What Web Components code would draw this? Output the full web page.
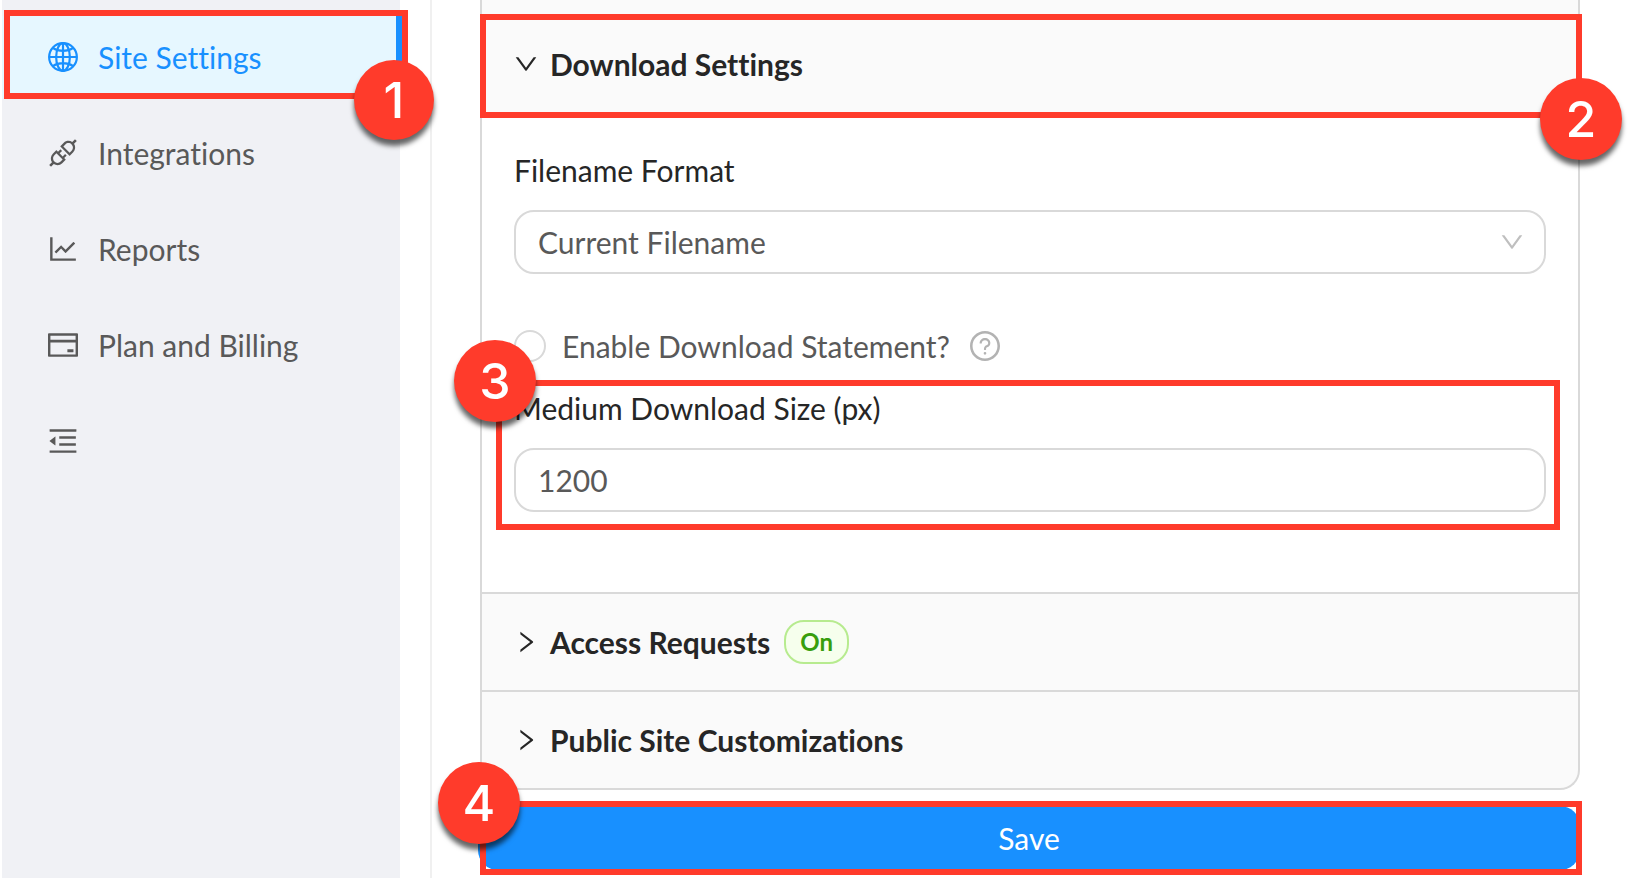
<!DOCTYPE html>
<html lang="en">
<head>
<meta charset="utf-8">
<title>Site Settings</title>
<style>
  :root {
    --primary: #1890ff;
    --mark: #ff3b2b;
    --border: #d9d9d9;
    --heading: #262626;
    --text: #595959;
  }
  body {
    margin: 0;
    background: #fff;
    color: var(--text);
    font: 30px/48px Lato, "Open Sans", sans-serif;
    font-variant-ligatures: none;
  }
</style>
</head>
<body>
<settings-page>
  <side-nav slot="nav">
    <step-mark step="1" class="nav-mark"><nav-item icon="global" active>Site Settings</nav-item></step-mark>
    <nav-item icon="api">Integrations</nav-item>
    <nav-item icon="chart">Reports</nav-item>
    <nav-item icon="card">Plan and Billing</nav-item>
    <nav-item icon="fold" label="Collapse menu"></nav-item>
  </side-nav>
  <collapse-group>
    <collapse-panel open marked heading="Download Settings">
      <download-form></download-form>
    </collapse-panel>
    <collapse-panel heading="Access Requests"><status-tag slot="extra">On</status-tag></collapse-panel>
    <collapse-panel heading="Public Site Customizations"></collapse-panel>
  </collapse-group>
  <save-bar>Save</save-bar>
</settings-page>

<script>
const ICONS = {
  global: `<g fill="none" stroke="currentColor" stroke-width="66">
    <circle cx="512" cy="512" r="414"/><ellipse cx="512" cy="512" rx="205" ry="414"/>
    <path d="M512 98v828M98 512h828M205 238c90 62 190 92 307 92s217-30 307-92M205 786c90-62 190-92 307-92s217 30 307 92"/></g>`,
  api: '<path d="M917.7 148.8l-42.4-42.4c-1.6-1.6-3.6-2.3-5.7-2.3s-4.1.8-5.7 2.3l-76.1 76.1a199.27 199.27 0 00-112.1-34.3c-51.2 0-102.4 19.5-141.5 58.6L432.3 308.7a8.03 8.03 0 000 11.3L704 591.7c1.6 1.6 3.6 2.3 5.7 2.3 2 0 4.1-.8 5.7-2.3l101.9-101.9c68.9-69 77-175.7 24.3-253.5l76.1-76.1c3.1-3.2 3.1-8.3 0-11.4zM769.1 441.7l-59.4 59.4-186.8-186.8 59.4-59.4c24.9-24.9 58.1-38.7 93.4-38.7 35.3 0 68.4 13.7 93.4 38.7 24.9 24.9 38.7 58.1 38.7 93.4 0 35.3-13.8 68.4-38.7 93.4zm-190.2 105a8.03 8.03 0 00-11.3 0L501 613.3 410.7 523l66.7-66.7c3.1-3.1 3.1-8.2 0-11.3L441 408.6a8.03 8.03 0 00-11.3 0L363 475.3l-43-43a7.85 7.85 0 00-5.7-2.3c-2 0-4.1.8-5.7 2.3L206.8 534.2c-68.9 69-77 175.7-24.3 253.5l-76.1 76.1a8.03 8.03 0 000 11.3l42.4 42.4c1.6 1.6 3.6 2.3 5.7 2.3s4.1-.8 5.7-2.3l76.1-76.1c33.7 22.9 72.9 34.3 112.1 34.3 51.2 0 102.4-19.5 141.5-58.6l101.9-101.9c3.1-3.1 3.1-8.2 0-11.3l-43-43 66.7-66.7c3.1-3.1 3.1-8.2 0-11.3l-36.6-36.2zM441.7 769.1a131.32 131.32 0 01-93.4 38.7c-35.3 0-68.4-13.7-93.4-38.7a131.32 131.32 0 01-38.7-93.4c0-35.3 13.7-68.4 38.7-93.4l59.4-59.4 186.8 186.8-59.4 59.4z"/>',
  chart: '<path d="M888 792H200V168c0-4.4-3.6-8-8-8h-56c-4.4 0-8 3.6-8 8v688c0 4.4 3.6 8 8 8h752c4.4 0 8-3.6 8-8v-56c0-4.4-3.6-8-8-8zM305.8 637.7c3.1 3.1 8.1 3.1 11.3 0l138.3-137.6L583 628.5c3.1 3.1 8.2 3.1 11.3 0l275.4-275.3c3.1-3.1 3.1-8.2 0-11.3l-39.6-39.6a8.03 8.03 0 00-11.3 0l-230 229.9L461.4 404a8.03 8.03 0 00-11.3 0L266.3 586.7a8.03 8.03 0 000 11.3l39.5 39.7z"/>',
  card: '<path d="M928 160H96c-17.7 0-32 14.3-32 32v640c0 17.7 14.3 32 32 32h832c17.7 0 32-14.3 32-32V192c0-17.7-14.3-32-32-32zm-792 72h752v120H136V232zm752 560H136V440h752v352zm-237-64h165c4.4 0 8-3.6 8-8v-72c0-4.4-3.6-8-8-8H651c-4.4 0-8 3.6-8 8v72c0 4.4 3.6 8 8 8z"/>',
  fold: '<path d="M408 442h480c4.4 0 8-3.6 8-8v-56c0-4.4-3.6-8-8-8H408c-4.4 0-8 3.6-8 8v56c0 4.4 3.6 8 8 8zm-8 204c0 4.4 3.6 8 8 8h480c4.4 0 8-3.6 8-8v-56c0-4.4-3.6-8-8-8H408c-4.4 0-8 3.6-8 8v56zm504-486H120c-4.4 0-8 3.6-8 8v56c0 4.4 3.6 8 8 8h784c4.4 0 8-3.6 8-8v-56c0-4.4-3.6-8-8-8zm0 632H120c-4.4 0-8 3.6-8 8v56c0 4.4 3.6 8 8 8h784c4.4 0 8-3.6 8-8v-56c0-4.4-3.6-8-8-8zM115.4 518.9L271.7 642c5.8 4.6 14.4.5 14.4-6.9V388.9c0-7.4-8.5-11.5-14.4-6.9L115.4 505.1a8.74 8.74 0 000 13.8z"/>',
  right: '<path d="M765.7 486.8L314.9 134.7A7.97 7.97 0 00302 141v77.3c0 4.9 2.3 9.6 6.1 12.6l360 281.1-360 281.1c-3.9 3-6.1 7.7-6.1 12.6V883c0 6.7 7.7 10.4 12.9 6.3l450.8-352.1a31.96 31.96 0 000-50.4z"/>',
  down: '<path d="M884 256h-75c-5.1 0-9.9 2.5-12.9 6.6L512 654.2 227.9 262.6c-3-4.1-7.8-6.6-12.9-6.6h-75c-6.5 0-10.3 7.4-6.5 12.7l352.6 486.1c12.8 17.6 39 17.6 51.7 0l352.6-486.1c3.9-5.3.1-12.7-6.4-12.7z"/>',
  question: '<path d="M512 64C264.6 64 64 264.6 64 512s200.6 448 448 448 448-200.6 448-448S759.4 64 512 64zm0 820c-205.4 0-372-166.6-372-372s166.6-372 372-372 372 166.6 372 372-166.6 372-372 372z"/><path d="M623.6 316.7C593.6 290.4 554 276 512 276s-81.6 14.5-111.6 40.7C369.2 344 352 380.7 352 420v7.6c0 4.4 3.6 8 8 8h48c4.4 0 8-3.6 8-8V420c0-44.1 43.1-80 96-80s96 35.9 96 80c0 31.1-22 59.6-56.1 72.7-21.2 8.1-39.2 22.3-52.1 40.9-13.1 19-19.9 41.8-19.9 64.9V620c0 4.4 3.6 8 8 8h48c4.4 0 8-3.6 8-8v-22.7a48.3 48.3 0 0130.9-44.8c59-22.7 97.1-74.7 97.1-132.5.1-39.3-17.1-76-48.3-103.3zM472 732a40 40 0 1080 0 40 40 0 10-80 0z"/>'
};

const icon = (name, size) =>
  `<svg width="${size}" height="${size}" viewBox="64 64 896 896" fill="currentColor" aria-hidden="true">${ICONS[name]}</svg>`;

class SettingsPage extends HTMLElement {
  constructor() {
    super();
    this.attachShadow({ mode: 'open' }).innerHTML = `
      <style>
        :host {
          display: flex;
          gap: 30px;
          min-height: 100vh;
        }
        main {
          flex: 1;
          min-width: 0;
          border-left: 2px solid #f0f0f0;
          padding: 0 48px;
        }
      </style>
      <slot name="nav"></slot>
      <main><slot></slot></main>
    `;
  }
}

class SideNav extends HTMLElement {
  constructor() {
    super();
    this.attachShadow({ mode: 'open' }).innerHTML = `
      <style>
        :host {
          display: block;
          flex: none;
          width: 398px;
          margin-left: 2px;
          background: #f0f1f5;
        }
        nav {
          display: flex;
          flex-direction: column;
          gap: 14px;
          padding-top: 16px;
        }
        ::slotted(.nav-mark) {
          --frame: -6px -6px -1px 2px;
          --badge-size: 80px;
          --badge-right: -32px;
          --badge-bottom: -42px;
          margin-right: -2px;
        }
      </style>
      <nav><slot></slot></nav>
    `;
  }
}

class NavItem extends HTMLElement {
  connectedCallback() {
    if (this.shadowRoot) return;
    const label = this.getAttribute('label');
    this.attachShadow({ mode: 'open' }).innerHTML = `
      <style>
        :host {
          display: block;
        }
        a {
          display: flex;
          align-items: center;
          gap: 20px;
          box-sizing: border-box;
          height: 82px;
          padding-left: 46px;
          color: var(--text);
          text-decoration: none;
        }
        :host([active]) a {
          border-right: 6px solid var(--primary);
          background: #e6f7ff;
          color: var(--primary);
        }
      </style>
      <a href="#"${label ? ` aria-label="${label}"` : ''}>${icon(this.getAttribute('icon'), 30)}<slot></slot></a>
    `;
  }
}

// Red frame with a numbered badge laid over whatever is slotted in
class StepMark extends HTMLElement {
  connectedCallback() {
    if (this.shadowRoot) return;
    this.attachShadow({ mode: 'open' }).innerHTML = `
      <style>
        :host {
          display: block;
          position: relative;
        }
        .frame {
          position: absolute;
          inset: var(--frame, 0);
          border: 6px solid var(--mark);
          pointer-events: none;
        }
        .badge {
          position: absolute;
          z-index: 1;
          top: var(--badge-top, auto);
          right: var(--badge-right, auto);
          bottom: var(--badge-bottom, auto);
          left: var(--badge-left, auto);
          width: var(--badge-size, 82px);
          height: var(--badge-size, 82px);
          border-radius: 50%;
          background: var(--mark);
          box-shadow: 0 6px 5px rgba(0, 0, 0, 0.6);
          color: #fff;
          font: 500 50px Inter, "Liberation Sans", sans-serif;
          line-height: var(--badge-size, 82px);
          text-align: center;
          pointer-events: none;
        }
      </style>
      <slot></slot>
      <div class="frame"></div>
      <div class="badge">${this.getAttribute('step')}</div>
    `;
  }
}

class CollapseGroup extends HTMLElement {
  constructor() {
    super();
    this.attachShadow({ mode: 'open' }).innerHTML = `
      <style>
        :host {
          display: block;
          border: 2px solid var(--border);
          border-top: 0;
          border-radius: 0 0 20px 20px;
          background: #fafafa;
          padding-top: 14px;
        }
      </style>
      <slot></slot>
    `;
  }
}

class CollapsePanel extends HTMLElement {
  connectedCallback() {
    if (this.shadowRoot) return;
    const open = this.hasAttribute('open');
    const header = `
      <div class="header">
        <button type="button" aria-expanded="${open}">${icon(open ? 'down' : 'right', 24)}${this.getAttribute('heading')}</button>
        <slot name="extra"></slot>
      </div>`;
    this.attachShadow({ mode: 'open' }).innerHTML = `
      <style>
        :host {
          display: block;
          border-top: 2px solid var(--border);
        }
        .header {
          display: flex;
          align-items: center;
          gap: 14px;
          height: 96px;
          padding: 0 32px;
        }
        button {
          display: flex;
          align-items: center;
          gap: 12px;
          padding: 0;
          border: 0;
          background: none;
          color: var(--heading);
          font: inherit;
          font-variant-ligatures: none;
          font-weight: 700;
        }
        step-mark {
          --frame: -2px -4px -6px -2px;
          --badge-right: -44px;
          --badge-bottom: -48px;
        }
        .content {
          border-top: 2px solid var(--border);
          background: #fff;
        }
      </style>
      ${this.hasAttribute('marked') ? `<step-mark step="2">${header}</step-mark>` : header}
      ${open ? '<div class="content"><slot></slot></div>' : ''}
    `;
  }
}

class StatusTag extends HTMLElement {
  constructor() {
    super();
    this.attachShadow({ mode: 'open' }).innerHTML = `
      <style>
        :host {
          display: block;
          padding: 0 14px;
          border: 2px solid #b7eb8f;
          border-radius: 20px;
          background: #f6ffed;
          color: #389e0d;
          font-size: 24px;
          font-weight: 700;
          line-height: 40px;
        }
      </style>
      <slot></slot>
    `;
  }
}

class DownloadForm extends HTMLElement {
  constructor() {
    super();
    this.attachShadow({ mode: 'open' }).innerHTML = `
      <style>
        :host {
          display: block;
          padding: 32px 32px 80px;
        }
        .label {
          display: block;
          margin-bottom: 16px;
          color: var(--heading);
        }
        .select {
          display: grid;
          align-items: center;
        }
        .select > * {
          grid-area: 1 / 1;
        }
        .select svg {
          justify-self: end;
          margin-right: 22px;
          color: #bfbfbf;
          pointer-events: none;
        }
        select, input[type="text"] {
          appearance: none;
          display: block;
          box-sizing: border-box;
          width: 100%;
          height: 64px;
          margin: 0;
          padding: 0 22px;
          border: 2px solid var(--border);
          border-radius: 20px;
          background: #fff;
          color: var(--text);
          font: inherit;
        }
        .check {
          display: flex;
          align-items: center;
          gap: 16px;
          margin: 48px 0 14px;
        }
        .check svg {
          margin-left: 4px;
          color: #b3b3b3;
        }
        input[type="checkbox"] {
          appearance: none;
          box-sizing: border-box;
          width: 32px;
          height: 32px;
          margin: 0;
          border: 2px solid var(--border);
          border-radius: 50%;
          background: #fff;
        }
        step-mark {
          --frame: -4px -14px -18px -18px;
          --badge-top: -44px;
          --badge-left: -60px;
        }
      </style>
      <label class="label" for="format">Filename Format</label>
      <div class="select">
        <select id="format"><option>Current Filename</option></select>
        ${icon('down', 24)}
      </div>
      <div class="check">
        <input type="checkbox" id="statement">
        <label for="statement">Enable Download Statement?</label>
        ${icon('question', 30)}
      </div>
      <step-mark step="3">
        <label class="label" for="size">Medium Download Size (px)</label>
        <input type="text" id="size" value="1200">
      </step-mark>
    `;
  }
}

class SaveBar extends HTMLElement {
  constructor() {
    super();
    this.attachShadow({ mode: 'open' }).innerHTML = `
      <style>
        :host {
          display: block;
          margin: 16px 0 8px -2px;
        }
        step-mark {
          --frame: -5px -2px -5px 2px;
          --badge-top: -44px;
          --badge-left: -40px;
        }
        button {
          display: block;
          width: 100%;
          height: 64px;
          padding: 0;
          border: 0;
          border-radius: 20px;
          background: var(--primary);
          color: #fff;
          font: inherit;
        }
      </style>
      <step-mark step="4"><button type="button"><slot></slot></button></step-mark>
    `;
  }
}

customElements.define('step-mark', StepMark);
customElements.define('settings-page', SettingsPage);
customElements.define('side-nav', SideNav);
customElements.define('nav-item', NavItem);
customElements.define('collapse-group', CollapseGroup);
customElements.define('collapse-panel', CollapsePanel);
customElements.define('status-tag', StatusTag);
customElements.define('download-form', DownloadForm);
customElements.define('save-bar', SaveBar);
</script>
</body>
</html>
